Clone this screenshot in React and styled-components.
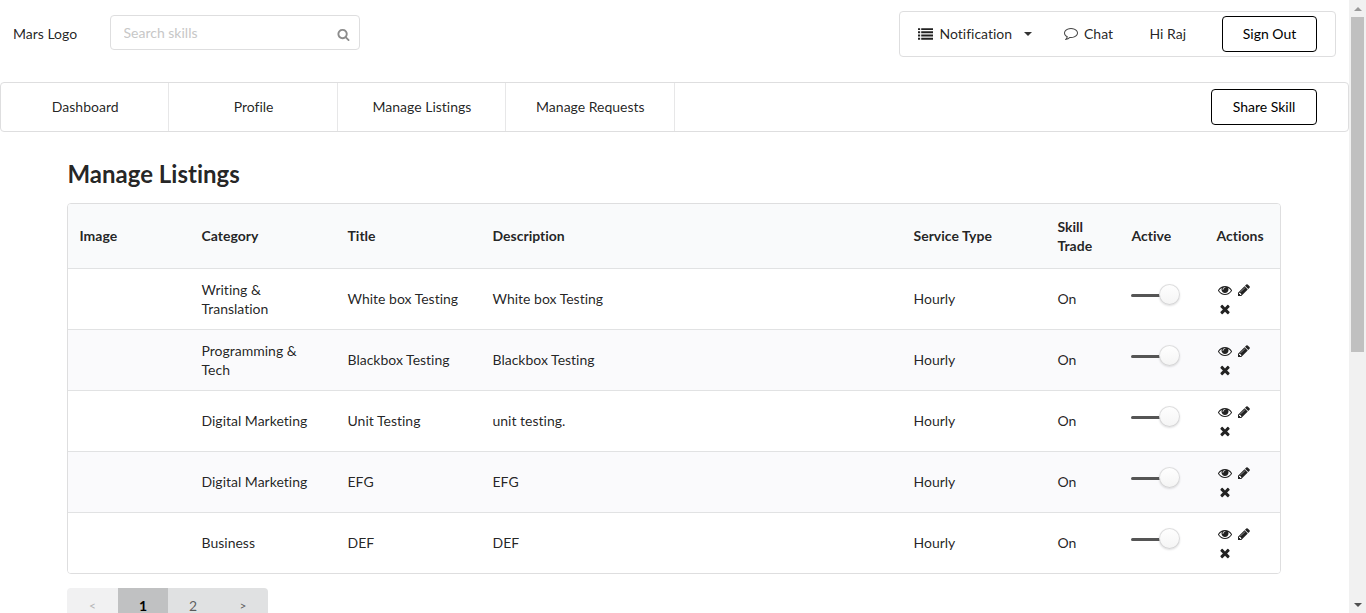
import React from "react";
import styled, { createGlobalStyle, css } from "styled-components";

const GlobalStyle = createGlobalStyle`
  * { box-sizing: border-box; }
  html, body { margin: 0; padding: 0; overflow: hidden; background: #fff; }
  body {
    font-family: Lato, "Liberation Sans", sans-serif;
    font-size: 14px;
    line-height: 19px;
    font-variant-ligatures: none;
    color: rgba(0, 0, 0, 0.87);
  }
`;

const Window = styled.div`
  display: flex;
  width: 1366px;
  height: 613px;
  overflow: hidden;
`;

const Page = styled.div`
  width: 1349px;
  height: 613px;
  overflow: hidden;
`;

const TopBar = styled.header`
  display: flex;
  align-items: flex-start;
  height: 82px;
  padding: 11px 13px 0;
`;

const Logo = styled.div`
  width: 97px;
  padding-top: 13px;
`;

const SearchBox = styled.label`
  display: flex;
  align-items: center;
  justify-content: space-between;
  width: 250px;
  height: 35px;
  margin-top: 4px;
  padding: 0 9.5px 0 12.5px;
  border: 1px solid #dededf;
  border-radius: 4px;

  svg { margin-top: 3px; }
`;

const SearchInput = styled.input`
  width: 190px;
  padding: 0 0 1px;
  border: 0;
  outline: 0;
  background: transparent;
  font: inherit;
  font-variant-ligatures: none;
  &::placeholder { color: #c7c7c7; opacity: 1; }
`;

const UserMenu = styled.nav`
  display: flex;
  align-items: center;
  width: 437px;
  height: 46px;
  margin-left: auto;
  padding: 0 18px;
  border: 1px solid #dededf;
  border-radius: 4px;
`;

const UserItem = styled.div`
  display: flex;
  align-items: center;
  gap: ${(p) => p.$gap || 0}px;
  width: ${(p) => p.$width}px;
  padding-bottom: 2px;
  white-space: nowrap;
`;

const Caret = styled.span`
  margin: 2px 0 0 5.5px;
  border: 4px solid transparent;
  border-top-color: #333;
  border-bottom: 0;
`;

const OutlineButton = styled.button`
  width: ${(p) => p.$width}px;
  height: 36px;
  margin-left: auto;
  padding: 0 0 2px;
  border: 1px solid #000;
  border-radius: 4px;
  background: #fff;
  color: #000;
  font: inherit;
`;

const Icon = styled.svg`
  flex: none;
  display: block;
  width: ${(p) => p.$size || 14}px;
  height: ${(p) => p.$size || 14}px;
  fill: ${(p) => p.$color || "#222"};
`;

const NavBar = styled.nav`
  display: flex;
  align-items: center;
  height: 50px;
  padding-right: 31px;
  border: 1px solid #dededf;
  border-radius: 4px;
`;

const NavItem = styled.a`
  display: flex;
  align-items: center;
  justify-content: center;
  width: 168.4px;
  height: 48px;
  padding: 0 0 2px 1px;
  border-right: 1px solid #e7e7e8;
`;

const Content = styled.main`
  width: 1214px;
  margin-left: 67px;
  padding-top: 27px;
`;

const Heading = styled.h2`
  margin: 0 0 14px;
  padding-left: 0.5px;
  font-size: 24px;
  line-height: 30px;
  font-weight: 700;
`;

const Table = styled.table`
  width: 1214px;
  table-layout: fixed;
  border: 1px solid #dededf;
  border-radius: 4px;
  border-collapse: separate;
  border-spacing: 0;
  overflow: hidden;
`;

const Column = styled.col`
  width: ${(p) => p.$width}px;
`;

const HeadCell = styled.th`
  height: 64px;
  padding: 0 11.5px 1px;
  background: #f9fafb;
  text-align: left;
  font-weight: 700;
`;

const Row = styled.tr`
  background: ${(p) => (p.$striped ? "#fafafc" : "#fff")};
`;

const Cell = styled.td`
  height: 61px;
  padding: 0 11.5px 1px;
  border-top: 1px solid #e1e2e3;
`;

const Toggle = styled.div`
  display: flex;
  align-items: center;
  width: 49px;
  height: 21px;
  margin: 0 0 8px -1px;
`;

const Track = styled.span`
  width: 29px;
  height: 3px;
  margin-top: 1px;
  border-radius: 2px 0 0 2px;
  background: #555;
`;

const Knob = styled.span`
  width: 21px;
  height: 21px;
  margin-left: -1px;
  border-radius: 50%;
  background: linear-gradient(#fff, #f4f4f4);
  box-shadow: 0 1px 2px rgba(34, 36, 38, 0.15), inset 0 0 0 1px rgba(34, 36, 38, 0.15);
`;

const Actions = styled.div`
  display: flex;
  flex-wrap: wrap;
  gap: 5px 5.5px;
  width: 44px;
  margin-left: 1px;
  padding-top: 1px;
`;

const Pagination = styled.div`
  display: inline-flex;
  margin-top: 14px;
  border-radius: 4px;
  overflow: hidden;
`;

const PageButton = styled.button`
  width: ${(p) => p.$width || 50}px;
  height: 36px;
  padding: 0 0 1px;
  border: 0;
  background: #e0e1e2;
  color: rgba(0, 0, 0, 0.6);
  font: inherit;
  font-size: ${(p) => (p.$arrow ? 12 : 14)}px;
  font-weight: ${(p) => (p.$active ? 700 : 400)};
  ${(p) => p.$active && css`background: #c0c1c2; color: #000;`}
  ${(p) => p.$disabled && css`background: #f1f1f2; color: #b5b5b6;`}
`;

const Scrollbar = styled.aside`
  display: flex;
  flex-direction: column;
  align-items: center;
  width: 17px;
  height: 613px;
  background: #f1f1f1;
`;

const Thumb = styled.div`
  width: 13px;
  height: 335px;
  margin-bottom: auto;
  background: #c0c0c0;
`;

const ScrollArrow = styled.div`
  display: flex;
  align-items: center;
  justify-content: center;
  height: 17px;
  &::before {
    content: "";
    border: 4px solid transparent;
    ${(p) => (p.$up
      ? css`border-top: 0; border-bottom-color: #9a9a9a;`
      : css`border-bottom: 0; border-top-color: #505050;`)}
  }
`;

const paths = {
  search: "M1216 832q0-185-131.5-316.5t-316.5-131.5-316.5 131.5-131.5 316.5 131.5 316.5 316.5 131.5 316.5-131.5 131.5-316.5zm512 832q0 52-38 90t-90 38q-54 0-90-38l-343-342q-179 124-399 124-143 0-273.5-55.5t-225-150-150-225-55.5-273.5 55.5-273.5 150-225 225-150 273.5-55.5 273.5 55.5 225 150 150 225 55.5 273.5q0 220-124 399l343 343q37 37 37 90z",
  list: "M0 256h256v224H0zM384 256h1408v224H384zM0 640h256v224H0zM384 640h1408v224H384zM0 1024h256v224H0zM384 1024h1408v224H384zM0 1408h256v224H0zM384 1408h1408v224H384z",
  chat: "M896 384q-204 0-381.5 69.5t-282 187.5-104.5 255q0 112 71.5 213.5t201.5 175.5l87 50-27 96q-24 91-70 172 152-63 275-171l43-38 57 6q69 8 130 8 204 0 381.5-69.5t282-187.5 104.5-255-104.5-255-282-187.5-381.5-69.5zm896 512q0 174-120 321.5t-326 233-450 85.5q-70 0-145-8-198 175-460 242-49 14-114 22h-5q-15 0-27-10.5t-16-27.5v-1q-3-4-.5-12t2-10 4.5-9.5l6-9 7-8.5 8-9q7-8 31-34.5t34.5-38 31-39.5 32.5-51 27-59 26-76q-157-89-247.5-220t-90.5-281q0-174 120-321.5t326-233 450-85.5 450 85.5 326 233 120 321.5z",
  eye: "M1664 960q-152-236-381-353 61 104 61 225 0 185-131.5 316.5t-316.5 131.5-316.5-131.5-131.5-316.5q0-121 61-225-229 117-381 353 133 205 333.5 326.5t434.5 121.5 434.5-121.5 333.5-326.5zm-720-384q0-20-14-34t-34-14q-125 0-214.5 89.5t-89.5 214.5q0 20 14 34t34 14 34-14 14-34q0-86 61-147t147-61q20 0 34-14t14-34zm848 384q0 34-20 69-140 230-376.5 368.5t-499.5 138.5-499.5-139-376.5-368q-20-35-20-69t20-69q140-229 376.5-368t499.5-139 499.5 139 376.5 368q20 35 20 69z",
  pencil: "M491 1536l91-91-235-235-91 91v107h128v128h107zm523-928q0-22-22-22-10 0-17 7l-542 542q-7 7-7 17 0 22 22 22 10 0 17-7l542-542q7-7 7-17zm-54-192l416 416-832 832h-416v-416zm683 96q0 53-37 90l-166 166-416-416 166-165q36-38 90-38 53 0 91 38l235 234q37 39 37 91z",
  close: "M1490 1322q0 40-28 68l-136 136q-28 28-68 28t-68-28l-294-294-294 294q-28 28-68 28t-68-28l-136-136q-28-28-28-68t28-68l294-294-294-294q-28-28-28-68t28-68l136-136q28-28 68-28t68 28l294 294 294-294q28-28 68-28t68 28l136 136q28 28 28 68t-28 68l-294 294 294 294q28 28 28 68z",
};

const Glyph = ({ name, size, color }) => (
  <Icon viewBox="0 0 1792 1792" $size={size} $color={color} aria-hidden="true">
    <path d={paths[name]} />
  </Icon>
);

const columns = [
  ["Image", 122],
  ["Category", 146],
  ["Title", 145],
  ["Description", 421],
  ["Service Type", 144],
  ["Skill Trade", 74],
  ["Active", 85],
  ["Actions", 75],
];

const listings = [
  ["Writing & Translation", "White box Testing", "White box Testing"],
  ["Programming & Tech", "Blackbox Testing", "Blackbox Testing"],
  ["Digital Marketing", "Unit Testing", "unit testing."],
  ["Digital Marketing", "EFG", "EFG"],
  ["Business", "DEF", "DEF"],
];

export default function App() {
  return (
    <Window>
      <GlobalStyle />
      <Page>
        <TopBar>
          <Logo>Mars Logo</Logo>
          <SearchBox>
            <SearchInput placeholder="Search skills" />
            <Glyph name="search" size={13} color="#8c8c8c" />
          </SearchBox>
          <UserMenu>
            <UserItem $width={146} $gap={6.5}>
              <Glyph name="list" size={15} />
              Notification
              <Caret />
            </UserItem>
            <UserItem $width={85.5} $gap={6}>
              <Glyph name="chat" color="#444" />
              Chat
            </UserItem>
            <UserItem $width={50}>Hi Raj</UserItem>
            <OutlineButton $width={95}>Sign Out</OutlineButton>
          </UserMenu>
        </TopBar>
        <NavBar>
          {["Dashboard", "Profile", "Manage Listings", "Manage Requests"].map((t) => (
            <NavItem key={t}>{t}</NavItem>
          ))}
          <OutlineButton $width={106}>Share Skill</OutlineButton>
        </NavBar>
        <Content>
          <Heading>Manage Listings</Heading>
          <Table>
            <colgroup>
              {columns.map(([name, width]) => <Column key={name} $width={width} />)}
            </colgroup>
            <thead>
              <tr>{columns.map(([name]) => <HeadCell key={name}>{name}</HeadCell>)}</tr>
            </thead>
            <tbody>
              {listings.map(([category, title, description], i) => (
                <Row key={i} $striped={i % 2 === 1}>
                  <Cell />
                  <Cell>{category}</Cell>
                  <Cell>{title}</Cell>
                  <Cell>{description}</Cell>
                  <Cell>Hourly</Cell>
                  <Cell>On</Cell>
                  <Cell><Toggle><Track /><Knob /></Toggle></Cell>
                  <Cell>
                    <Actions>
                      <Glyph name="eye" />
                      <Glyph name="pencil" />
                      <Glyph name="close" />
                    </Actions>
                  </Cell>
                </Row>
              ))}
            </tbody>
          </Table>
          <Pagination>
            <PageButton $width={51} $arrow $disabled>&lt;</PageButton>
            <PageButton $active>1</PageButton>
            <PageButton>2</PageButton>
            <PageButton $arrow>&gt;</PageButton>
          </Pagination>
        </Content>
      </Page>
      <Scrollbar>
        <ScrollArrow $up />
        <Thumb />
        <ScrollArrow />
      </Scrollbar>
    </Window>
  );
}
